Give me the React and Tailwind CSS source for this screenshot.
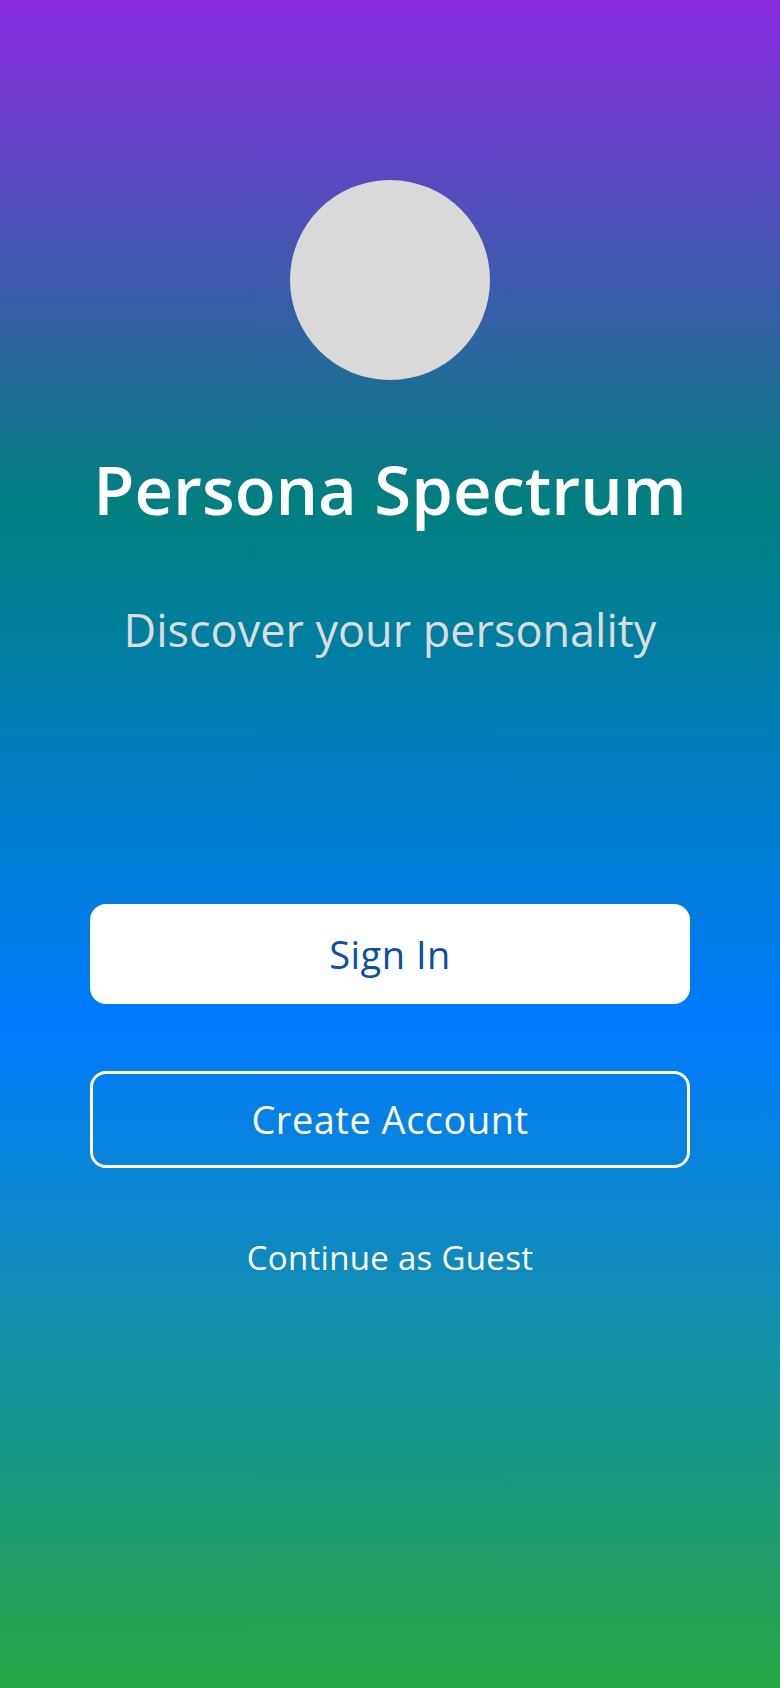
export default function App() {
  return (
    <div
      className="min-h-screen w-full flex flex-col items-center bg-[linear-gradient(180deg,#8a2be2_0%,#008080_30%,#007bff_61%,#28a745_100%)]"
      style={{ fontFamily: '"Open Sans", "Noto Sans", sans-serif' }}
    >
      {/* logo placeholder */}
      <div className="mt-[180px] w-[200px] h-[200px] rounded-full bg-[#d9d9d9]" />

      <h1 className="mt-[67px] text-[67px] leading-[84px] font-semibold text-white">
        Persona Spectrum
      </h1>

      <p className="mt-[74px] text-[45px] leading-[50px] text-[#dcdcdc]">
        Discover your personality
      </p>

      <div className="mt-[249px] w-[600px] flex flex-col">
        <button className="h-[100px] w-full rounded-2xl bg-white text-[#0b4fa8] text-[38px] tracking-[0.5px]">
          Sign In
        </button>
        <button className="mt-[67px] h-[97px] w-full rounded-2xl border-[3px] border-white text-white text-[38px] tracking-[0.5px]">
          Create Account
        </button>
        <button className="mt-[70px] text-white text-[33px] leading-[40px] tracking-[0.3px]">
          Continue as Guest
        </button>
      </div>
    </div>
  );
}
